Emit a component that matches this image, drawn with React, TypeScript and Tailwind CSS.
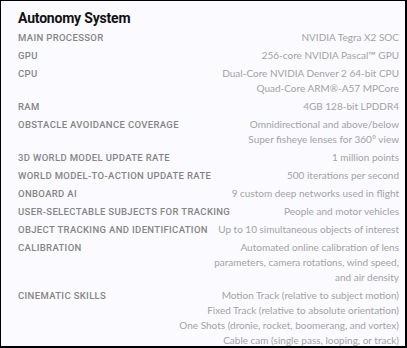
const specs: { label: string; values: string[] }[] = [
  { label: "Main Processor", values: ["NVIDIA Tegra X2 SOC"] },
  { label: "GPU", values: ["256-core NVIDIA Pascal™ GPU"] },
  { label: "CPU", values: ["Dual-Core NVIDIA Denver 2 64-bit CPU", "Quad-Core ARM®-A57 MPCore"] },
  { label: "RAM", values: ["4GB 128-bit LPDDR4"] },
  {
    label: "Obstacle Avoidance Coverage",
    values: ["Omnidirectional and above/below", "Super fisheye lenses for 360° view"],
  },
  { label: "3D World Model Update Rate", values: ["1 million points"] },
  { label: "World Model-to-Action Update Rate", values: ["500 iterations per second"] },
  { label: "Onboard AI", values: ["9 custom deep networks used in flight"] },
  { label: "User-Selectable Subjects for Tracking", values: ["People and motor vehicles"] },
  { label: "Object Tracking and Identification", values: ["Up to 10 simultaneous objects of interest"] },
  {
    label: "Calibration",
    values: ["Automated online calibration of lens", "parameters, camera rotations, wind speed,", "and air density"],
  },
  {
    label: "Cinematic Skills",
    values: [
      "Motion Track (relative to subject motion)",
      "Fixed Track (relative to absolute orientation)",
      "One Shots (dronie, rocket, boomerang, and vortex)",
      "Cable cam (single pass, looping, or track)",
    ],
  },
];

const App = () => (
  <div className="w-[407px] h-[348px] bg-[#fafaff] border-l border-t border-r-2 border-b-2 border-black overflow-hidden">
    <div className="pl-[17px] pr-[6px] pt-[6px]">
      <h2 className="text-[14px] leading-[22px] font-bold text-[#111] font-['Roboto',sans-serif] tracking-[-0.2px]">
        Autonomy System
      </h2>
      <div className="mt-[1px] flex flex-col gap-[3px]">
        {specs.map((s) => (
          <div key={s.label} className="flex justify-between items-start">
            <span className="uppercase text-[9.5px] leading-[15px] font-medium tracking-[0.35px] text-[#858585] font-['Roboto',sans-serif]">
              {s.label}
            </span>
            <div className="flex flex-col items-end text-right">
              {s.values.map((v) => (
                <span key={v} className="text-[10px] leading-[15px] text-[#a3a3a3] font-['Lato',sans-serif]">
                  {v}
                </span>
              ))}
            </div>
          </div>
        ))}
      </div>
    </div>
  </div>
);

export default App;
